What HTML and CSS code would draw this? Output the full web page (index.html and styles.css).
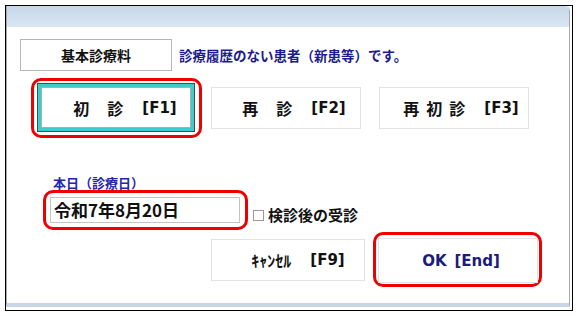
FILE: index.html
```html
<!DOCTYPE html>
<html lang="ja">
<head>
  <meta charset="UTF-8">
  <title>基本診療料</title>
  <link rel="stylesheet" href="styles.css">
</head>
<body>
  <div class="frame">
    <div class="window">
      <div class="titlebar"></div>
      <div class="content">
        <div class="row-top">
          <div class="fee-box">基本診療料</div>
          <span class="note">診療履歴のない患者（新患等）です。</span>
        </div>

        <div class="row-visit">
          <div class="mark mark-first">
            <button class="btn btn-active">初<i class="sp"></i>診<i class="sp2"></i><span class="key">[F1]</span></button>
          </div>
          <button class="btn btn-again">再<i class="sp"></i>診<i class="sp2"></i><span class="key">[F2]</span></button>
          <button class="btn btn-refirst">再<i class="sp-s"></i>初<i class="sp-s"></i>診<i class="sp2"></i><span class="key">[F3]</span></button>
        </div>

        <div class="date-label">本日（診療日）</div>
        <div class="row-date">
          <div class="mark mark-date">
            <div class="date-field">令和7年8月20日</div>
          </div>
          <label class="check"><span class="box"></span>検診後の受診</label>
        </div>

        <div class="row-actions">
          <button class="btn btn-cancel">ｷｬﾝｾﾙ<i class="sp2"></i><span class="key">[F9]</span></button>
          <div class="mark mark-ok">
            <button class="btn btn-ok"><span class="key">OK</span><i class="sp-ok"></i><span class="key">[End]</span></button>
          </div>
        </div>
      </div>
    </div>
  </div>
</body>
</html>
```

FILE: styles.css
```css
/* dialog screenshot */

body {
  margin: 0;
  padding: 5px 0 0 5px;
  background-color: #fff;
  font-family: "Noto Sans CJK JP", "Noto Sans", sans-serif;
}

.frame {
  box-sizing: border-box;
  width: 568px;
  height: 306px;
  border: 1px solid #000;
  padding: 0 1px 2px 0;
}

.window {
  box-sizing: border-box;
  width: 564px;
  height: 301px;
  border-left: 1px solid #a8a8a8;
  border-right: 1px solid #a8a8a8;
  border-bottom: 4px solid #c9d5e2;
  border-top-right-radius: 5px;
  background-color: #fff;
}

.titlebar {
  height: 21px;
  background: linear-gradient(#c6d7e9, #dbe6f1);
  border-top-right-radius: 5px;
}

.content {
  padding: 12px 0 0 13px;
}

/* top row */

.row-top {
  display: flex;
  align-items: center;
}

.fee-box {
  box-sizing: border-box;
  width: 152px;
  height: 32px;
  border: 1px solid #b5b5b5;
  display: flex;
  align-items: center;
  justify-content: center;
  font-size: 14px;
  font-weight: 700;
  color: #111;
}

.note {
  margin-left: 7px;
  font-size: 13.5px;
  font-weight: 700;
  color: #1c1c8e;
}

/* buttons */

.btn {
  box-sizing: border-box;
  background-color: #fff;
  border: 1px solid #e2e2e2;
  font-family: "Noto Sans CJK JP", sans-serif;
  font-size: 16px;
  font-weight: 700;
  color: #111;
  display: flex;
  align-items: center;
  justify-content: center;
  padding: 0;
  cursor: pointer;
}

.btn .key {
  font-family: "DejaVu Sans", sans-serif;
  font-size: 15px;
}

.btn i {
  display: inline-block;
}

.sp {
  width: 18px;
}

.sp2 {
  width: 19px;
}

.sp-s {
  width: 7px;
}

.sp-ok {
  width: 8px;
}

.mark {
  border: 3px solid #ee0000;
  border-radius: 10px;
}

.row-visit {
  display: flex;
  align-items: center;
  margin-top: 7px;
  padding-left: 11px;
}

.mark-first {
  padding: 2px 4px 3px 3px;
}

.btn-active {
  width: 158px;
  height: 49px;
  border: 1px solid #4a4a4a;
  box-shadow: inset 0 0 0 3px #3ccccc, inset 0 0 0 4px #9fb4b4;
  padding-left: 18px;
}

.btn-again {
  width: 150px;
  height: 42px;
  margin-left: 9px;
  padding-left: 16px;
}

.btn-refirst {
  width: 150px;
  height: 42px;
  margin-left: 18px;
  padding-left: 14px;
}

/* date */

.date-label {
  margin-top: 38px;
  margin-left: 33px;
  font-size: 13px;
  line-height: 14px;
  font-weight: 700;
  color: #2626a8;
}

.row-date {
  display: flex;
  margin-left: 23px;
}

.mark-date {
  padding: 4px 5px 4px 4px;
}

.date-field {
  box-sizing: border-box;
  width: 190px;
  height: 26px;
  border: 1px solid #c4c4c4;
  padding-left: 3px;
  font-size: 17px;
  line-height: 24px;
  font-weight: 700;
  color: #111;
}

.check {
  align-self: flex-end;
  margin: 0 0 7px 5px;
  display: flex;
  align-items: center;
  font-size: 15px;
  line-height: 16px;
  font-weight: 700;
  color: #111;
}

.box {
  box-sizing: border-box;
  width: 11px;
  height: 11px;
  border: 1px solid #9a9a9a;
  margin-right: 4px;
}

/* actions */

.row-actions {
  display: flex;
  align-items: center;
  margin-top: 2px;
  padding-left: 191px;
}

.btn-cancel {
  width: 154px;
  height: 42px;
  margin-right: 8px;
  padding-left: 20px;
}

.mark-ok {
  padding: 3px 1px 1px 2px;
}

.btn-ok {
  width: 160px;
  height: 45px;
  color: #1a1a80;
  padding-left: 6px;
}
```
